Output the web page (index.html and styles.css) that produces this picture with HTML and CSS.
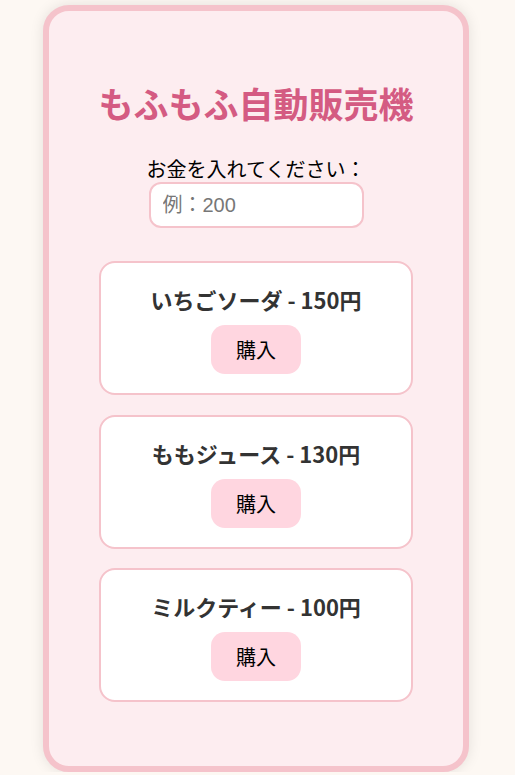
FILE: index.html
```html
<!DOCTYPE html>
<html lang="ja">
<head>
<meta charset="utf-8">
<title>もふもふ自動販売機</title>
<link rel="stylesheet" href="styles.css">
</head>
<body>
<div class="machine">
  <h1 class="title">もふもふ自動販売機</h1>
  <label class="money-label" for="money">お金を入れてください：</label>
  <input class="money-input" id="money" type="number" placeholder="例：200">
  <div class="items">
    <div class="item">
      <h2 class="item-name">いちごソーダ - 150円</h2>
      <button class="buy">購入</button>
    </div>
    <div class="item">
      <h2 class="item-name">ももジュース - 130円</h2>
      <button class="buy">購入</button>
    </div>
    <div class="item">
      <h2 class="item-name">ミルクティー - 100円</h2>
      <button class="buy">購入</button>
    </div>
  </div>
</div>
</body>
</html>
```
FILE: styles.css
```css
html, body {
  margin: 0;
  padding: 0;
}
body {
  background: #fdf8f3;
  font-family: "Noto Sans CJK JP", "Noto Sans", sans-serif;
  padding: 5px 3px 0 0;
}
.machine {
  box-sizing: border-box;
  width: 426px;
  margin: 0 auto;
  background: #fdedf0;
  border: 6px solid #f5c3cb;
  border-radius: 26px;
  box-shadow: 0 0 14px rgba(0, 0, 0, 0.1);
  padding: 67px 50px 64px;
  display: flex;
  flex-direction: column;
  align-items: center;
  text-align: center;
}
.title {
  margin: 0 0 28px;
  font-size: 35px;
  line-height: 49px;
  font-weight: 700;
  color: #d45b82;
  white-space: nowrap;
}
.money-label {
  display: block;
  font-size: 20px;
  line-height: 27px;
  color: #000;
}
.money-input {
  box-sizing: border-box;
  width: 215px;
  height: 46px;
  margin: 0;
  padding: 0 12px;
  border: 2px solid #f5c3cb;
  border-radius: 12px;
  background: #fff;
  font-family: "Liberation Sans", "Noto Sans CJK JP", sans-serif;
  font-size: 20px;
  color: #333;
  outline: none;
}
.money-input::placeholder {
  color: #777;
}
.items {
  align-self: stretch;
  margin-top: 33px;
  display: flex;
  flex-direction: column;
  gap: 19.5px;
}
.item {
  background: #fff;
  border: 2px solid #f5c3cb;
  border-radius: 16px;
  padding: 20px 20px 19px;
  display: flex;
  flex-direction: column;
  align-items: center;
}
.item-name {
  margin: 0 0 10px;
  font-size: 22px;
  line-height: 32px;
  font-weight: 700;
  color: #333;
}
.buy {
  width: 90px;
  height: 49px;
  border: none;
  border-radius: 14px;
  background: #ffd6e0;
  font-family: "Noto Sans CJK JP", sans-serif;
  font-size: 20px;
  color: #000;
  padding: 0;
  cursor: pointer;
}
```
